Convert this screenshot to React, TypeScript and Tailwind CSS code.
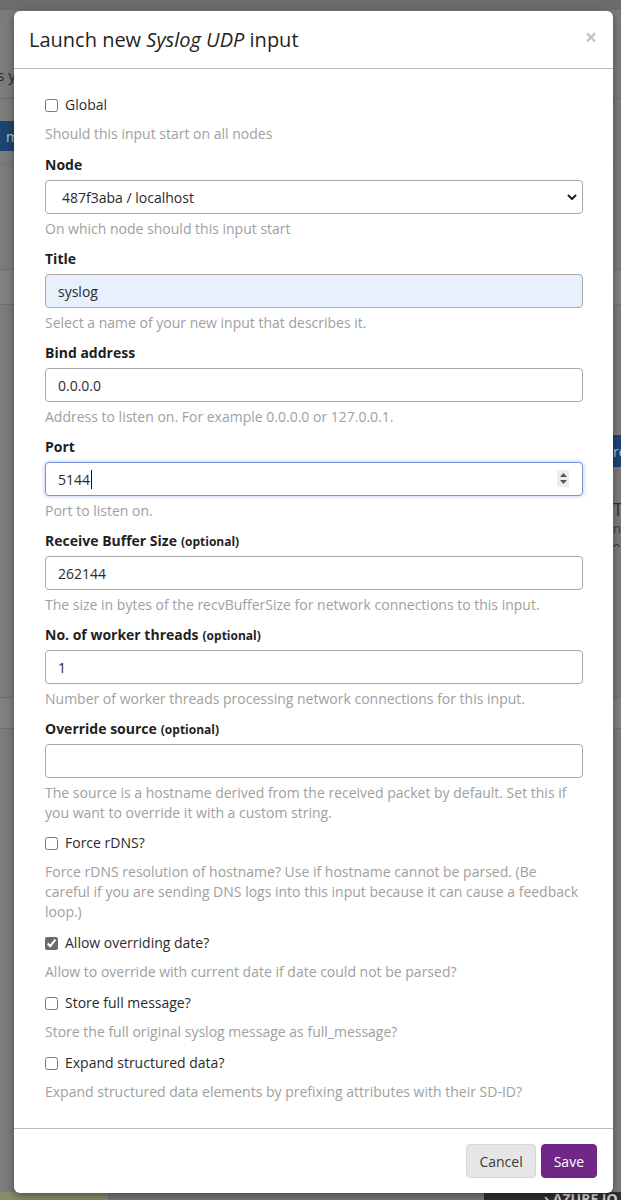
import React from 'react';

const font = { fontFamily: '"Open Sans", "Noto Sans", sans-serif' };

function HelpText({ children }: { children: React.ReactNode }) {
  return <p className="mt-[5px] text-[14px] leading-5 text-[#a0a0a0]">{children}</p>;
}

function FieldLabel({ text, optional }: { text: string; optional?: boolean }) {
  return (
    <label className="mb-[5px] block h-[21px] pt-px text-[14px] font-bold leading-5 text-[#1f1f1f]">
      {text}
      {optional && <span className="ml-[4px] text-[12px] font-bold leading-none">(optional)</span>}
    </label>
  );
}

const inputBase =
  'block h-[34px] w-full rounded-[4px] border border-[#a9a9a9] px-[12px] text-[14px] text-[#2b2b2b] outline-none';

function TextField({ label, optional, value, help, autofill }: { label: string; optional?: boolean; value: string; help: string; autofill?: boolean }) {
  return (
    <div className="mb-[9px]">
      <FieldLabel text={label} optional={optional} />
      <input readOnly value={value} className={`${inputBase} ${autofill ? 'bg-[#e8f0fe]' : 'bg-white'}`} style={font} />
      <HelpText>{help}</HelpText>
    </div>
  );
}

function CheckRow({ label, checked, help, mb = 'mb-[11px]' }: { label: string; checked?: boolean; help: string; mb?: string }) {
  return (
    <div className={mb}>
      <label className="flex h-5 items-center gap-[7px] text-[14px] leading-5 text-[#2b2b2b]">
        <input type="checkbox" readOnly checked={!!checked} className="m-0 h-[13px] w-[13px] accent-[#6b6b6b]" />
        <span>{label}</span>
      </label>
      <p className="mt-[9px] text-[14px] leading-5 text-[#a0a0a0]">{help}</p>
    </div>
  );
}

export default function App() {
  return (
    <div className="relative h-[1200px] w-[621px] overflow-hidden bg-[#7b7b7b]" style={font}>
      {/* page behind the dimmed overlay */}
      <div className="flex h-full flex-col">
        <div className="h-[10px] bg-[#6c6c6c]" />
        <div className="flex h-[88px] items-end pb-[12px]">
          <span className="-ml-[12px] text-[15px] text-[#2e2e2e]">ns y</span>
        </div>
        <div className="h-px bg-[#6a6a6a]" />
        <div className="h-[22px]" />
        <div className="flex h-[30px] justify-between">
          <div className="flex w-[14px] items-center overflow-hidden bg-[#1e4470] text-[14px] text-[#b8c4d4]">
            <span className="ml-[6px]">m</span>
          </div>
        </div>
        <div className="h-[13px]" />
        <div className="h-px bg-[#727272]" />
        <div className="h-[104px]" />
        <div className="h-px bg-[#707070]" />
        <div className="h-[34px] bg-[#808080]" />
        <div className="h-px bg-[#707070]" />
        <div className="h-[130px]" />
        <div className="flex h-[32px] justify-end">
          <div className="flex w-[8px] items-center overflow-hidden bg-[#1e4470] text-[14px] text-[#b8c4d4]">
            <span>re</span>
          </div>
        </div>
        <div className="flex h-[80px] justify-end pt-[32px]">
          <div className="w-[8px] overflow-hidden text-[13px] leading-[18px] text-[#2e2e2e]">
            <div className="text-[18px] leading-5">Th</div>
            <div className="text-[#1e4470]">n</div>
            <div>e</div>
            <div>m</div>
          </div>
        </div>
        <div className="h-[150px]" />
        <div className="h-px bg-[#6e6e6e]" />
        <div className="h-[30px] bg-[#808080]" />
        <div className="h-px bg-[#6e6e6e]" />
        <div className="flex-1" />
        <div className="flex h-[8px]">
          <div className="w-[108px] bg-[#8a8c6c]" />
          <div className="w-[376px] bg-[#7b7b7b]" />
          <div className="flex flex-1 items-start overflow-hidden bg-[#303030] pl-[60px] text-[14px] font-bold leading-[14px] text-[#d8d8d8]">
            › AZURE IO
          </div>
        </div>
      </div>

      {/* modal */}
      <div className="absolute left-[14px] top-[11px] w-[599px] rounded-[6px] bg-white shadow-[0_3px_9px_rgba(0,0,0,0.4)]">
        <div className="flex items-start justify-between border-b border-[#bdbdbd] px-[15px] py-[15px]">
          <h4 className="text-[20px] leading-[27px] text-[#1f1f1f]">
            Launch new <em>Syslog UDP</em> input
          </h4>
          <button className="mr-[1px] mt-[-2px] text-[21px] font-bold leading-[27px] text-[#c4c4c4]">×</button>
        </div>

        <div className="pb-[26px] pl-[31px] pr-[30px] pt-[26px]">
          <CheckRow label="Global" help="Should this input start on all nodes" mb="mb-[10px]" />

          <div className="mb-[9px]">
            <FieldLabel text="Node" />
            <div className="relative">
              <div className={`${inputBase} flex items-center bg-white pl-[16px]`}>487f3aba / localhost</div>
              <svg className="absolute right-[6px] top-[14px]" width="10" height="7" viewBox="0 0 10 7">
                <polyline points="1.5,1.5 5,5 8.5,1.5" fill="none" stroke="#222" strokeWidth="2" strokeLinecap="round" strokeLinejoin="round" />
              </svg>
            </div>
            <HelpText>On which node should this input start</HelpText>
          </div>

          <TextField label="Title" value="syslog" help="Select a name of your new input that describes it." autofill />
          <TextField label="Bind address" value="0.0.0.0" help="Address to listen on. For example 0.0.0.0 or 127.0.0.1." />

          <div className="mb-[9px]">
            <FieldLabel text="Port" />
            <div className="relative">
              <div className="flex h-[34px] w-full items-center rounded-[4px] border border-[#7696dc] bg-white px-[12px] text-[14px] text-[#2b2b2b] shadow-[0_0_4px_rgba(102,140,220,0.55)]">
                <span>5144</span>
                <span className="ml-px h-[19px] w-px bg-[#111]" />
              </div>
              <div className="absolute right-[14px] top-[8px] flex h-[17px] w-[12px] flex-col items-center justify-center gap-[3px] bg-[#ededed]">
                <svg width="7" height="4" viewBox="0 0 7 4">
                  <polygon points="0,4 3.5,0 7,4" fill="#555" />
                </svg>
                <svg width="7" height="4" viewBox="0 0 7 4">
                  <polygon points="0,0 7,0 3.5,4" fill="#555" />
                </svg>
              </div>
            </div>
            <HelpText>Port to listen on.</HelpText>
          </div>

          <TextField label="Receive Buffer Size" optional value="262144" help="The size in bytes of the recvBufferSize for network connections to this input." />
          <TextField label="No. of worker threads" optional value="1" help="Number of worker threads processing network connections for this input." />
          <div className="mb-[10px]">
            <FieldLabel text="Override source" optional />
            <input readOnly value="" className={`${inputBase} bg-white`} style={font} />
            <HelpText>
              The source is a hostname derived from the received packet by default. Set this if you want to override it with a custom string.
            </HelpText>
          </div>

          <CheckRow
            label="Force rDNS?"
            help="Force rDNS resolution of hostname? Use if hostname cannot be parsed. (Be careful if you are sending DNS logs into this input because it can cause a feedback loop.)"
          />
          <CheckRow label="Allow overriding date?" checked help="Allow to override with current date if date could not be parsed?" />
          <CheckRow label="Store full message?" help="Store the full original syslog message as full_message?" />
          <CheckRow label="Expand structured data?" help="Expand structured data elements by prefixing attributes with their SD-ID?" mb="" />
        </div>

        <div className="flex justify-end gap-[5px] border-t border-[#bdbdbd] pb-[15px] pl-[15px] pr-[16px] pt-[15px]">
          <button className="h-[34px] rounded-[4px] border border-[#d6d6d6] bg-[#e6e6e6] px-[12px] text-[14px] text-[#3a3a3a]">
            Cancel
          </button>
          <button className="h-[34px] rounded-[4px] border border-[#6a2380] bg-[#702785] px-[12px] text-[14px] text-white">
            Save
          </button>
        </div>
      </div>
    </div>
  );
}
